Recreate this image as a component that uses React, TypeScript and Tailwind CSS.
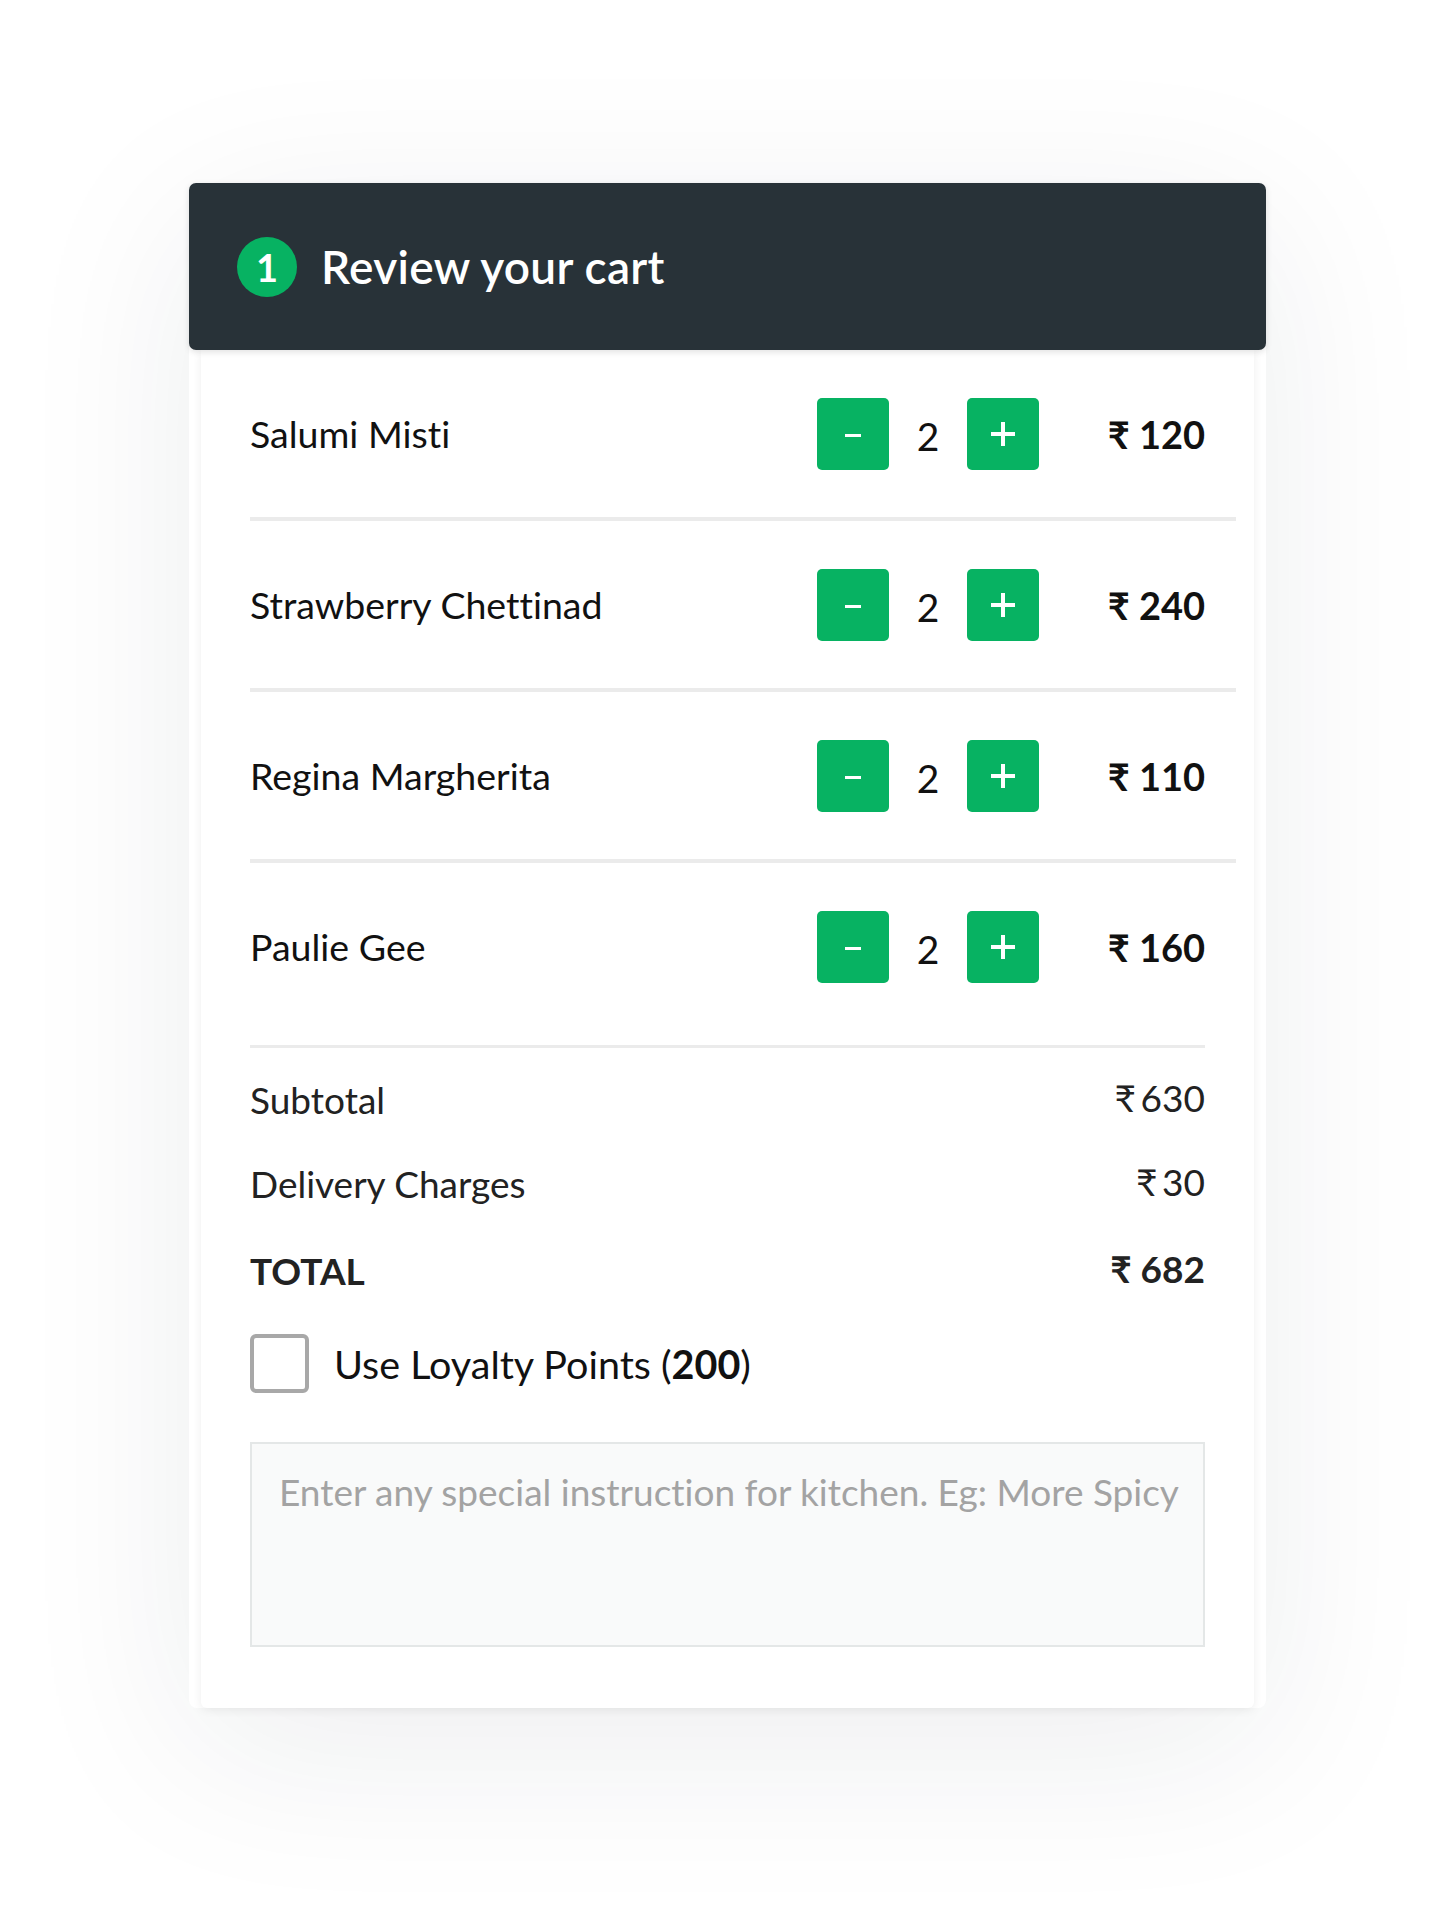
import React from 'react';

interface CartItem {
  name: string;
  qty: number;
  price: number;
}

const items: CartItem[] = [
  { name: 'Salumi Misti', qty: 2, price: 120 },
  { name: 'Strawberry Chettinad', qty: 2, price: 240 },
  { name: 'Regina Margherita', qty: 2, price: 110 },
  { name: 'Paulie Gee', qty: 2, price: 160 },
];

function MinusButton() {
  return (
    <button className="w-[72px] h-[72px] rounded-[5px] bg-[#07b262] flex items-center justify-center">
      <span className="block w-[16px] h-[3px] bg-white mt-[3px]" />
    </button>
  );
}

function PlusButton() {
  return (
    <button className="w-[72px] h-[72px] rounded-[5px] bg-[#07b262] flex items-center justify-center">
      <span className="relative block w-[24px] h-[24px]">
        <span className="absolute left-0 top-[10px] w-[24px] h-[4px] bg-white" />
        <span className="absolute top-0 left-[10px] w-[4px] h-[24px] bg-white" />
      </span>
    </button>
  );
}

function ItemRow({ item, last }: { item: CartItem; last: boolean }) {
  return (
    <div
      className={
        last
          ? 'flex items-center pr-[31px] pt-[48px] pb-[48px]'
          : 'flex items-center pr-[31px] pt-[48px] pb-[47px] border-b-[4px] border-[#ebebeb]'
      }
    >
      <div className="flex-1 text-[37.5px] text-[#111]">{item.name}</div>
      <MinusButton />
      <div className="w-[78px] text-center text-[39px] text-[#111] pt-[4px]">{item.qty}</div>
      <PlusButton />
      <div className="w-[166px] text-right text-[38px] font-bold text-[#111]">₹ {item.price}</div>
    </div>
  );
}

export default function App() {
  const subtotal = 630;
  const delivery = 30;
  const total = 682;

  return (
    <div className="min-h-[1905px] w-full bg-white flex justify-center pt-[183px] font-['Lato','Noto_Sans',sans-serif] [font-variant-ligatures:none]">
      <div className="w-[1077px] h-fit shadow-[0_40px_180px_rgba(30,40,50,0.08)] rounded-[8px]">
        {/* Header */}
        <div className="h-[167px] bg-[#283238] rounded-[7px] flex items-center pl-[48px] shadow-[0_2px_6px_rgba(0,0,0,0.12)] relative z-10">
          <div className="w-[60px] h-[60px] rounded-full bg-[#07b262] flex items-center justify-center text-white text-[38px] font-bold leading-none">
            1
          </div>
          <h1 className="ml-[24px] text-white text-[46px] font-semibold tracking-[0.3px]">Review your cart</h1>
        </div>

        {/* Body */}
        <div className="mx-[12px] bg-white rounded-b-[6px] pl-[49px] pr-[18px] pb-[61px] shadow-[0_2px_10px_rgba(0,0,0,0.07)]">
          {items.map((item, i) => (
            <ItemRow key={item.name} item={item} last={i === items.length - 1} />
          ))}

          {/* Summary */}
          <div className="mr-[31px] mt-[14px] border-t-[3px] border-[#ebebeb] pt-[10px]">
            <div className="h-[84px] flex items-center justify-between text-[37px] text-[#222]">
              <span>Subtotal</span>
              <span className="pb-[4px]">₹&#8201;{subtotal}</span>
            </div>
            <div className="h-[84px] flex items-center justify-between text-[37px] text-[#222]">
              <span>Delivery Charges</span>
              <span className="pb-[4px]">₹&#8201;{delivery}</span>
            </div>
            <div className="h-[90px] flex items-center justify-between text-[37px] font-bold text-[#222]">
              <span>TOTAL</span>
              <span className="pb-[4px]">₹ {total}</span>
            </div>

            <label className="mt-[18px] flex items-center">
              <span className="w-[59px] h-[59px] rounded-[6px] border-[4px] border-[#a8a8a8] bg-white" />
              <span className="ml-[25px] text-[39.5px] text-[#111]">
                Use Loyalty Points (<strong className="font-bold">200</strong>)
              </span>
            </label>

            <textarea
              className="mt-[49px] block w-full h-[205px] resize-none bg-[#f9fafa] border-[2px] border-[#e4e7e7] pl-[27px] pt-[20px] text-[37px] text-[#333] outline-none placeholder:text-[#a3a3a3]"
              placeholder="Enter any special instruction for kitchen. Eg: More Spicy"
            />
          </div>
        </div>
      </div>
    </div>
  );
}
